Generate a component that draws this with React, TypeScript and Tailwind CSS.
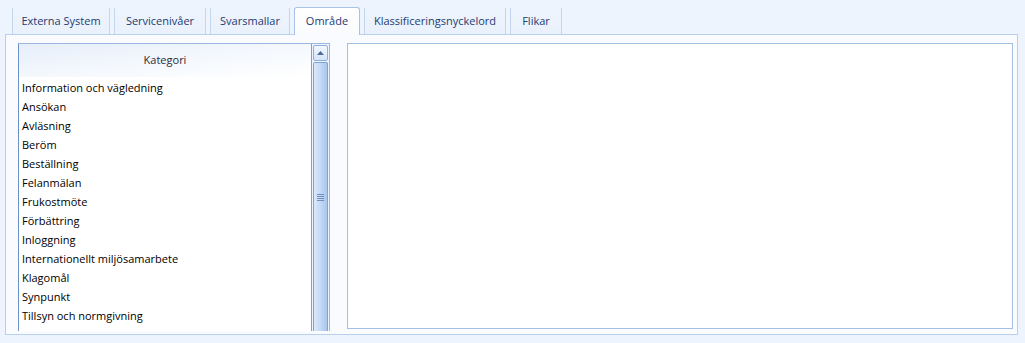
import React from 'react';

const tabs = [
  { label: 'Externa System', w: 'w-[98px]' },
  { label: 'Servicenivåer', w: 'w-[92px]' },
  { label: 'Svarsmallar', w: 'w-[80px]' },
  { label: 'Område', w: 'w-[66px]', active: true },
  { label: 'Klassificeringsnyckelord', w: 'w-[142px]' },
  { label: 'Flikar', w: 'w-[52px]' },
];

const categories = [
  'Information och vägledning',
  'Ansökan',
  'Avläsning',
  'Beröm',
  'Beställning',
  'Felanmälan',
  'Frukostmöte',
  'Förbättring',
  'Inloggning',
  'Internationellt miljösamarbete',
  'Klagomål',
  'Synpunkt',
  'Tillsyn och normgivning',
];

function Tab({ label, w, active }: { label: string; w: string; active?: boolean }) {
  if (active) {
    return (
      <div
        className={`${w} h-[28px] -mb-px relative z-10 flex items-center justify-center rounded-t-[3px] border border-b-0 border-[#a9c3e6] bg-gradient-to-b from-white to-[#f9fbfe] text-[#1d3c72]`}
      >
        {label}
      </div>
    );
  }
  return (
    <div
      className={`${w} h-[26px] flex items-center justify-center border-x border-[#c3d6ee] bg-gradient-to-b from-[#eef4fd] to-[#e9f1fc] text-[#1d3c72]`}
    >
      {label}
    </div>
  );
}

function Scrollbar() {
  return (
    <div className="w-[18px] flex flex-col border-l border-[#7c9fd0] bg-[#eef4fd] px-px pt-px">
      <div className="h-[16px] flex items-center justify-center rounded-[2px] border border-[#8fb0de] bg-gradient-to-b from-[#f2f7fe] to-[#d4e4f8]">
        <svg width="7" height="4" viewBox="0 0 7 4">
          <path d="M0 4 L3.5 0 L7 4 Z" fill="#4d6c9a" />
        </svg>
      </div>
      <div className="flex-1 mt-px flex items-center justify-center rounded-t-[2px] border border-b-0 border-[#7fa3d6] bg-gradient-to-r from-[#dbe8fa] via-[#c4d9f5] to-[#a9c6ee]">
        <div className="flex flex-col gap-px">
          <div className="w-[7px] h-px bg-[#6f8fbf]" />
          <div className="w-[7px] h-px bg-[#6f8fbf]" />
          <div className="w-[7px] h-px bg-[#6f8fbf]" />
          <div className="w-[7px] h-px bg-[#6f8fbf]" />
        </div>
      </div>
    </div>
  );
}

export default function App() {
  return (
    <div
      className="w-[1025px] h-[343px] overflow-hidden bg-[#eef4fd] text-[11px]"
      style={{ fontFamily: '"Segoe UI", "Open Sans", "Liberation Sans", sans-serif' }}
    >
      <div className="h-[34px] flex items-end gap-[4px] pl-[12px]">
        {tabs.map((t) => (
          <Tab key={t.label} {...t} />
        ))}
      </div>
      <div className="mx-[5px] w-[1013px] h-[301px] border border-[#b9d0ec] bg-[#f9fbfe] flex gap-[17px] pl-[12px] pt-[8px]">
        <div className="w-[312px] h-[288px] overflow-hidden flex border border-[#9db8df] border-l-[#6b91c9] border-b-0 bg-white">
          <div className="flex-1 flex flex-col">
            <div className="h-[33px] flex items-center justify-center bg-gradient-to-br from-[#e6eefa] via-[#f4f8fd] to-white text-[#2b2b3b]">
              Kategori
            </div>
            <div className="flex flex-col pt-px pl-[3px] text-black">
              {categories.map((c) => (
                <div key={c} className="h-[19px] leading-[19px]">
                  {c}
                </div>
              ))}
            </div>
          </div>
          <Scrollbar />
        </div>
        <div className="w-[666px] h-[286px] border border-[#a3c0e3] bg-white" />
      </div>
    </div>
  );
}
